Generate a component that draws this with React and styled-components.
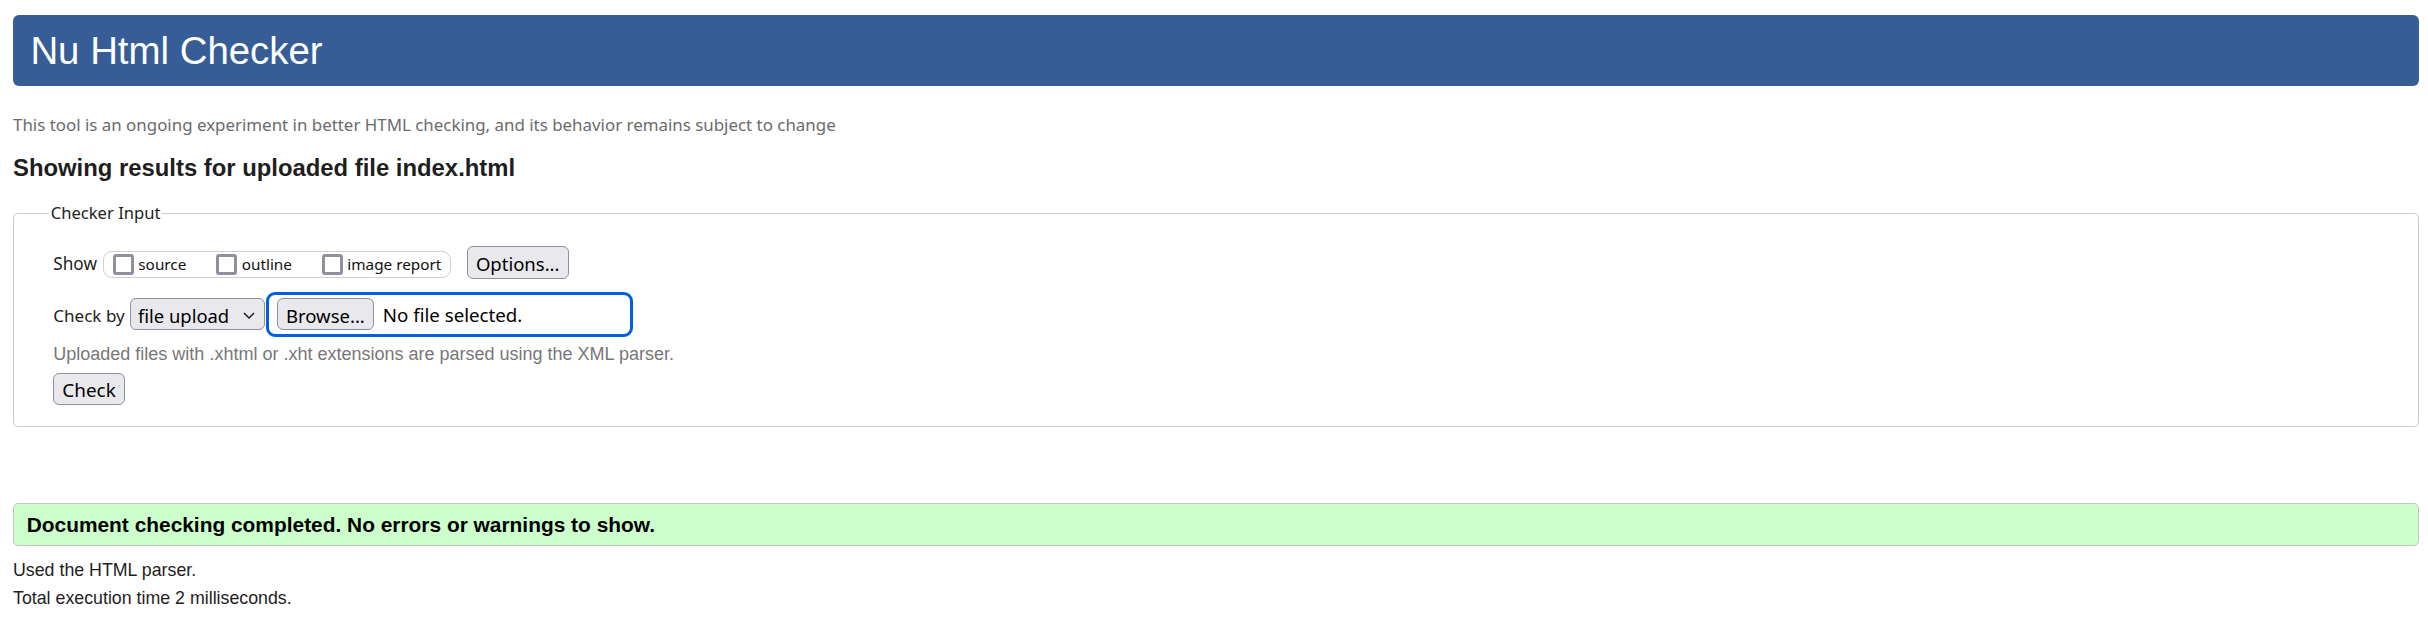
import React from "react";
import styled, { createGlobalStyle } from "styled-components";

const UI = `"Noto Sans", "Open Sans", sans-serif`;
const ARIAL = `"Liberation Sans", Arial, sans-serif`;

const GlobalStyle = createGlobalStyle`
  html, body { margin: 0; padding: 0; background: #fff; }
  body { font-family: ${ARIAL}; color: #222; }
  *, *::before, *::after { box-sizing: border-box; }
`;

const Page = styled.main`
  padding: 15px 9px 0 13px;
`;

const Banner = styled.h1`
  margin: 0;
  height: 71px;
  display: flex;
  align-items: center;
  padding: 0 17.4px;
  background: #365d95;
  border-radius: 6px;
  color: #fff;
  font: 400 38.4px/71px ${ARIAL};
`;

const Intro = styled.p`
  margin: 28.3px 0 0;
  font: 400 16.9px/22px ${UI};
  color: #6b6b6b;
`;

const ResultsHeading = styled.h2`
  margin: 17.4px 0 0;
  font: 700 23.85px/28px ${ARIAL};
  color: #1e1e1e;
`;

const InputFieldset = styled.fieldset`
  margin: 20.8px 0 0;
  padding: 0;
  min-width: 0;
  border: 1px solid #cbcbcb;
  border-radius: 5px;
`;

const Legend = styled.legend`
  margin-left: 34.7px;
  padding: 0 2px;
  font: 400 16.6px/22px ${UI};
  color: #222;
`;

const FieldBody = styled.div`
  display: flex;
  flex-direction: column;
  align-items: flex-start;
  padding: 21.5px 0 21px 39.3px;
`;

const Row = styled.div`
  display: flex;
  align-items: center;
  height: ${(p) => p.$h}px;
  margin-top: ${(p) => p.$mt || 0}px;
`;

const RowLabel = styled.span`
  font: 400 ${(p) => p.$size}px/22px ${UI};
  color: #222;
  padding-top: ${(p) => p.$pt}px;
  margin-right: ${(p) => p.$mr}px;
`;

const ShowGroup = styled.div`
  display: flex;
  align-items: center;
  height: 26.7px;
  margin: 3.6px 16.3px 0 0;
  padding: 0 8.3px 0 9px;
  border: 1px solid #cfcfcf;
  border-radius: 9px;
`;

const ShowOption = styled.label`
  display: flex;
  align-items: center;
  gap: 4.7px;
  & + & {
    margin-left: 30px;
  }
`;

const Checkbox = styled.input.attrs({ type: "checkbox" })`
  appearance: none;
  margin: 0;
  width: 20.7px;
  height: 20.7px;
  border: 3px solid #8f8f9d;
  border-radius: 3px;
  background: #fff;
`;

const OptionText = styled.span`
  font: 400 15.3px/20px ${UI};
  color: #111;
`;

const Button = styled.button`
  height: ${(p) => p.$h || 32.4}px;
  margin: 0;
  margin-top: ${(p) => p.$mt || 0}px;
  padding: 2.2px 8px 0;
  border: 1px solid #8f8f9d;
  border-radius: 6px;
  background: #e9e9ed;
  color: #000;
  font: 400 ${(p) => p.$size || 18.5}px/27px ${UI};
  white-space: nowrap;
  cursor: default;
`;

const SelectBox = styled.div`
  display: flex;
  align-items: center;
  width: 135px;
  height: 32.4px;
  padding: 2px 9px 0 7.3px;
  border: 1px solid #8f8f9d;
  border-radius: 6px;
  background: #e9e9ed;
  color: #000;
  font: 400 18.4px/27px ${UI};
  svg {
    margin: 1px 0 0 auto;
  }
`;

const FileField = styled.div`
  display: flex;
  align-items: center;
  gap: 9px;
  width: 366.6px;
  height: 45px;
  margin-left: 1.7px;
  padding-left: 7.6px;
  border: 3px solid #0060df;
  border-radius: 9px;
`;

const FileStatus = styled.span`
  font: 400 18.7px/24px ${UI};
  color: #000;
  padding-top: 1px;
`;

const Note = styled.p`
  margin: 6.1px 0 0;
  font: 400 18px/22px ${ARIAL};
  color: #777;
`;

const Success = styled.p`
  margin: 76.3px 0 0;
  height: 43px;
  padding: 1px 12.7px 0;
  border: 1px solid #c6c6c6;
  border-radius: 5px;
  background: #ccffcc;
  color: #000;
  font: 700 20.9px/40px ${ARIAL};
`;

const Details = styled.p`
  margin: ${(p) => p.$mt || 0}px 0 0;
  font: 400 17.8px/28.3px ${ARIAL};
  color: #1e1e1e;
`;

const Chevron = () => (
  <svg width="12" height="7" viewBox="0 0 12 7" aria-hidden="true">
    <path d="M1 1l5 5 5-5" fill="none" stroke="#222" strokeWidth="1.5" />
  </svg>
);

export default function App() {
  return (
    <>
      <GlobalStyle />
      <Page>
        <Banner>Nu Html Checker</Banner>
        <Intro>
          This tool is an ongoing experiment in better HTML checking, and its
          behavior remains subject to change
        </Intro>
        <ResultsHeading>Showing results for uploaded file index.html</ResultsHeading>
        <InputFieldset>
          <Legend>Checker Input</Legend>
          <FieldBody>
            <Row $h={33}>
              <RowLabel $size={17.2} $pt={3.6} $mr={6}>Show</RowLabel>
              <ShowGroup>
                <ShowOption>
                  <Checkbox />
                  <OptionText>source</OptionText>
                </ShowOption>
                <ShowOption>
                  <Checkbox />
                  <OptionText>outline</OptionText>
                </ShowOption>
                <ShowOption>
                  <Checkbox />
                  <OptionText>image report</OptionText>
                </ShowOption>
              </ShowGroup>
              <Button $h={33}>Options...</Button>
            </Row>
            <Row $h={45} $mt={12.7}>
              <RowLabel $size={17.05} $pt={2.8} $mr={5}>Check by</RowLabel>
              <SelectBox>
                file upload
                <Chevron />
              </SelectBox>
              <FileField>
                <Button>Browse...</Button>
                <FileStatus>No file selected.</FileStatus>
              </FileField>
            </Row>
            <Note>
              Uploaded files with .xhtml or .xht extensions are parsed using the
              XML parser.
            </Note>
            <Button $h={31.7} $mt={8.5} $size={18.9}>Check</Button>
          </FieldBody>
        </InputFieldset>
        <Success>Document checking completed. No errors or warnings to show.</Success>
        <Details $mt={9.8}>Used the HTML parser.</Details>
        <Details>Total execution time 2 milliseconds.</Details>
      </Page>
    </>
  );
}
